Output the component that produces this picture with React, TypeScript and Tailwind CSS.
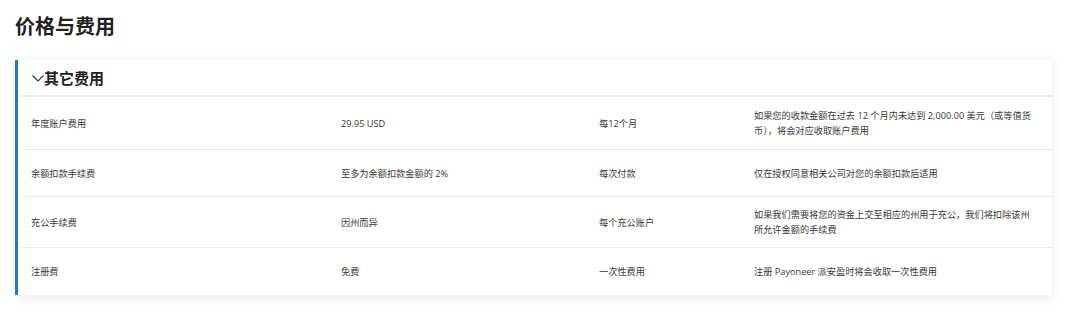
const rows = [
  {
    name: "年度账户费用",
    amount: "29.95 USD",
    when: "每12个月",
    note: "如果您的收款金额在过去 12 个月内未达到 2,000.00 美元（或等值货币），将会对应收取账户费用",
    pad: "py-[11px]",
  },
  {
    name: "余额扣款手续费",
    amount: "至多为余额扣款金额的 2%",
    when: "每次付款",
    note: "仅在授权同意相关公司对您的余额扣款后适用",
    pad: "py-[11px]",
  },
  {
    name: "充公手续费",
    amount: "因州而异",
    when: "每个充公账户",
    note: "如果我们需要将您的资金上交至相应的州用于充公，我们将扣除该州所允许金额的手续费",
    pad: "py-[10px]",
  },
  {
    name: "注册费",
    amount: "免费",
    when: "一次性费用",
    note: "注册 Payoneer 派安盈时将会收取一次性费用",
    pad: "py-[11px]",
  },
]

export default function App() {
  return (
    <div
      className="w-[1080px] h-[321px] bg-white text-[#333]"
      style={{ fontFamily: '"Open Sans", "Noto Sans CJK SC", sans-serif' }}
    >
      <h1 className="pl-[15px] pt-[13px] text-[20px] leading-[28px] font-bold text-[#222]">价格与费用</h1>

      <div className="ml-[15px] mt-[19px] w-[1037px] border-l-[3px] border-[#1a7bc6] bg-white shadow-[0_2px_10px_rgba(0,0,0,0.09)]">
        <div className="flex items-center h-[37px] pl-[14px] border-b-[2px] border-[#ececec]">
          <svg width="12" height="7" viewBox="0 0 12 7" fill="none" className="mt-[1px]">
            <path d="M0.5 0.5 L6 6 L11.5 0.5" stroke="#333" strokeWidth="1.1" />
          </svg>
          <span className="text-[15px] font-bold leading-[20px] text-[#222]">其它费用</span>
        </div>

        {rows.map((r, i) => (
          <div
            key={r.name}
            className={
              "grid grid-cols-[310px_258px_155px_1fr] items-center min-h-[47px] text-[9.2px] leading-[15px] text-[#3a3a3a] " +
              (i < rows.length - 1 ? "border-b border-[#ececec]" : "")
            }
          >
            <div className="px-[13px]">{r.name}</div>
            <div className="px-[13px]">{r.amount}</div>
            <div className="px-[13px]">{r.when}</div>
            <div className={"pl-[13px] pr-[18px] " + r.pad}>{r.note}</div>
          </div>
        ))}
      </div>
    </div>
  )
}
